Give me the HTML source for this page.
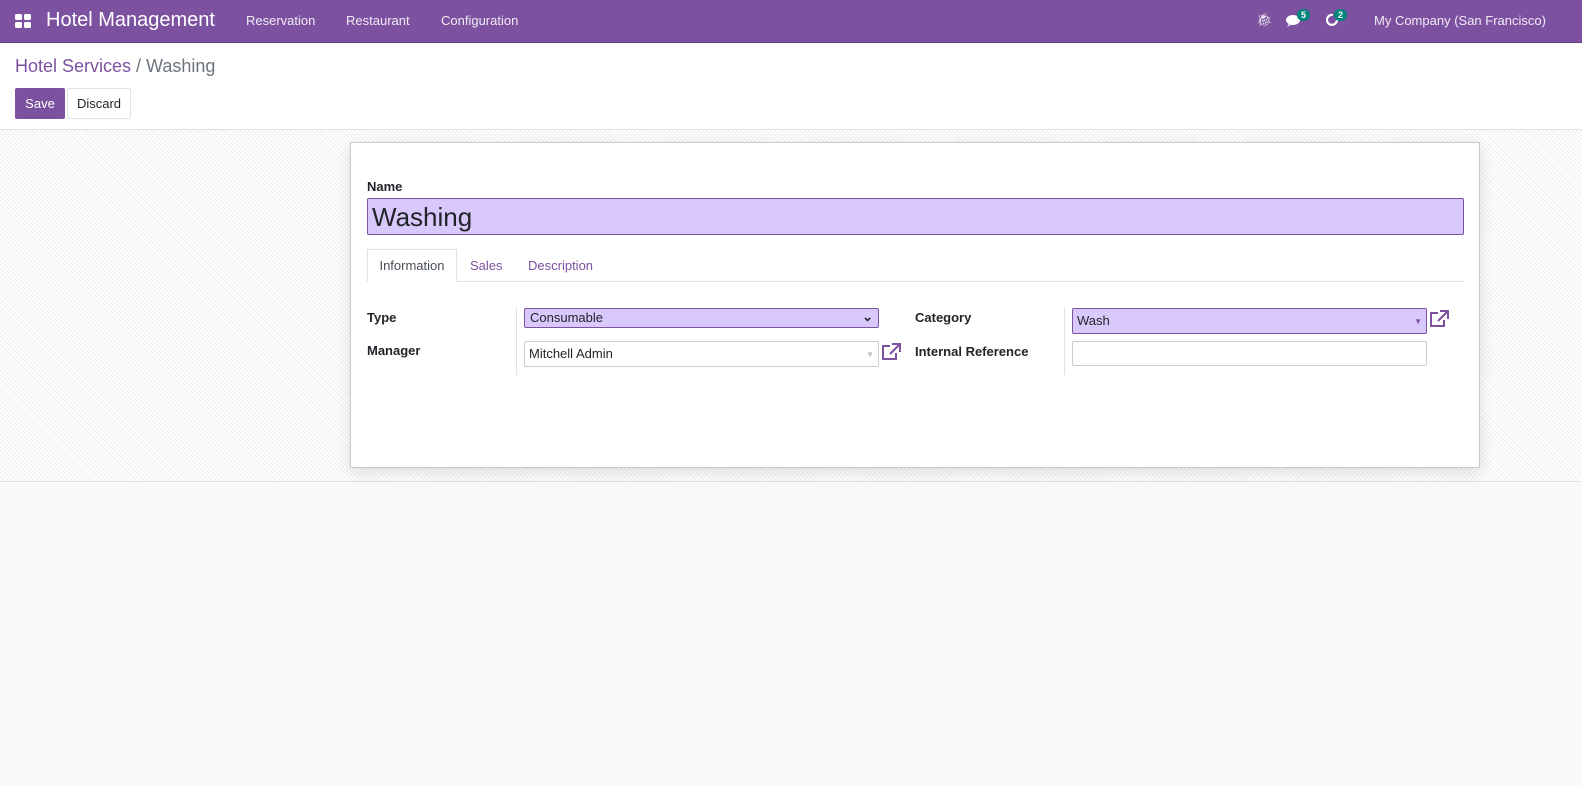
<!DOCTYPE html>
<html><head><style>
*{box-sizing:border-box;margin:0;padding:0}
body{width:1582px;height:786px;background:#f8f9fa;font-family:"Liberation Sans",sans-serif;font-size:13px;color:#212529;position:relative;overflow:hidden}
.nav{position:absolute;left:0;top:0;width:1582px;height:43px;background:#7c52a0;border-bottom:1px solid #5f3d7e;color:#fff}
.nav span{position:absolute;top:13px;font-size:13px;color:#f0eaf5}
.ctl{position:absolute;left:0;top:43px;width:1582px;height:87px;background:#fff;border-bottom:1px solid #dee2e6}
.sheetbg{position:absolute;left:0;top:130px;width:1582px;height:352px;background:#fff repeating-linear-gradient(45deg,#eee 0 1px,#fff 1px 3px);border-bottom:1px solid #dee2e6}
.sheet{position:absolute;left:350px;top:142px;width:1130px;height:326px;background:#fff;border:1px solid #c9c9d0;box-shadow:0 4px 14px rgba(0,0,0,.12)}
.abs{position:absolute}
.lbl{font-weight:bold;font-size:13px;color:#212529}
.inp{position:absolute;border:1px solid #ccc;border-radius:2px;background:#fff;font-size:13px;padding:3px 4px}
.pur{background:#d9c8fb;border-color:#7c52a0}
.badge{position:absolute;background:#00857c;color:#fff;font-size:9px;font-weight:bold;border-radius:8px;padding:1px 4px}
</style></head><body>
<div class="nav">
 <svg class="abs" style="left:15px;top:14px" width="16" height="14"><rect x="0" y="0" width="7" height="6" rx="1.5" fill="#fff"/><rect x="9" y="0" width="7" height="6" rx="1.5" fill="#fff"/><rect x="0" y="8" width="7" height="6" rx="1.5" fill="#fff"/><rect x="9" y="8" width="7" height="6" rx="1.5" fill="#fff"/></svg>
 <span style="left:46px;top:9px;font-size:20px;color:#fff">Hotel Management</span>
 <span style="left:246px">Reservation</span>
 <span style="left:346px">Restaurant</span>
 <span style="left:441px">Configuration</span>
 <span style="left:1256px;top:12px;font-size:13px">🐞︎</span>
 <svg class="abs" style="left:1286px;top:14px" width="16" height="13"><ellipse cx="7" cy="6" rx="7" ry="5" fill="#fff"/><path d="M3 10 L1 13 L6 10Z" fill="#fff"/></svg>
 <div class="badge" style="left:1297px;top:9px">5</div>
 <svg class="abs" style="left:1326px;top:13px" width="14" height="14"><path d="M11 7 A5 5 0 1 1 7 2" stroke="#fff" stroke-width="2.2" fill="none"/></svg>
 <div class="badge" style="left:1334px;top:9px">2</div>
 <span style="left:1374px">My Company (San Francisco)</span>
</div>
<div class="ctl">
 <div class="abs" style="left:15px;top:13px;font-size:18px"><span style="color:#7c52a0">Hotel Services</span><span style="color:#6c757d"> / Washing</span></div>
 <div class="abs" style="left:15px;top:45px;width:50px;height:31px;background:#7c52a0;color:#fff;border-radius:2px;text-align:center;line-height:31px">Save</div>
 <div class="abs" style="left:67px;top:45px;width:64px;height:31px;background:#fff;border:1px solid #dee2e6;border-radius:2px;text-align:center;line-height:29px">Discard</div>
</div>
<div class="sheetbg"></div>
<div class="sheet">
 <div class="abs lbl" style="left:16px;top:36px">Name</div>
 <div class="inp pur" style="left:16px;top:55px;width:1097px;height:37px;font-size:26px;padding:2px 4px;line-height:32px">Washing</div>
 <div class="abs" style="left:16px;top:138px;width:1097px;border-top:1px solid #dee2e6"></div>
 <div class="abs" style="left:16px;top:106px;width:90px;height:33px;background:#fff;border:1px solid #dee2e6;border-bottom:none;text-align:center;line-height:31px;color:#495057">Information</div>
 <div class="abs" style="left:119px;top:115px;color:#7c52a0">Sales</div>
 <div class="abs" style="left:177px;top:115px;color:#7c52a0">Description</div>
 <div class="abs lbl" style="left:16px;top:167px">Type</div>
 <div class="abs lbl" style="left:16px;top:200px">Manager</div>
 <div class="abs" style="left:165px;top:164px;height:68px;border-left:1px solid #dee2e6"></div>
 <div class="inp pur" style="left:173px;top:165px;width:355px;height:20px;padding:1px 5px">Consumable<span style="position:absolute;right:5px;top:0;font-weight:bold">⌄</span></div>
 <div class="inp" style="left:173px;top:198px;width:355px;height:26px;line-height:18px">Mitchell Admin<span style="position:absolute;right:4px;top:4px;color:#bbb;font-size:8px">▼</span></div>
 <svg class="abs" style="left:530px;top:200px" width="20" height="18"><path d="M9 3 H2 V16 H15 V10" stroke="#7c52a0" stroke-width="2" fill="none"/><path d="M11 1 H19 V9 M19 1 L9 11" stroke="#7c52a0" stroke-width="2" fill="none"/></svg>
 <div class="abs lbl" style="left:564px;top:167px">Category</div>
 <div class="abs lbl" style="left:564px;top:201px">Internal Reference</div>
 <div class="abs" style="left:713px;top:164px;height:68px;border-left:1px solid #dee2e6"></div>
 <div class="inp pur" style="left:721px;top:165px;width:355px;height:26px;line-height:18px">Wash<span style="position:absolute;right:4px;top:4px;color:#7c52a0;font-size:8px">▼</span></div>
 <svg class="abs" style="left:1078px;top:167px" width="20" height="18"><path d="M9 3 H2 V16 H15 V10" stroke="#7c52a0" stroke-width="2" fill="none"/><path d="M11 1 H19 V9 M19 1 L9 11" stroke="#7c52a0" stroke-width="2" fill="none"/></svg>
 <div class="inp" style="left:721px;top:198px;width:355px;height:25px"></div>
</div>
</body></html>
